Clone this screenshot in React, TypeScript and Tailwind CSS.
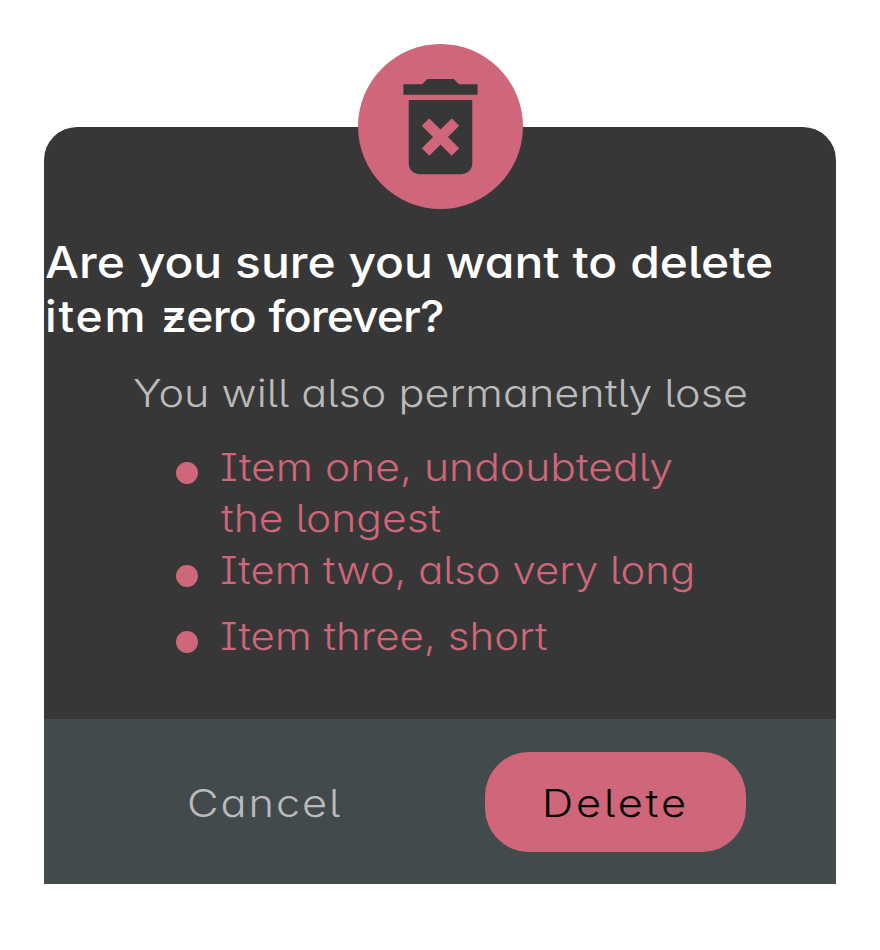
import { MdDeleteForever } from "react-icons/md";

const items = [
  {
    height: "h-[103px]",
    lines: [
      { text: "Item one, undoubtedly", style: "scale-x-[1.122]" },
      { text: "the longest", style: "scale-x-[1.12] ml-[1px]" },
    ],
  },
  {
    height: "h-[66px]",
    lines: [{ text: "Item two, also very long", style: "scale-x-[1.102]" }],
  },
  {
    height: "h-[66px]",
    lines: [{ text: "Item three, short", style: "scale-x-[1.107]" }],
  },
];

export default function App() {
  return (
    <div className="h-[950px] w-[880px] bg-white px-11 pt-11 font-['Inter',sans-serif] [font-feature-settings:'cv05','cv08','cv11']">
      <main className="mt-[83px] flex h-[757px] flex-col rounded-t-[33px] bg-[#373737]">
        <div className="-mt-[83px] ml-[314px] flex size-[165px] shrink-0 items-center justify-center rounded-full bg-[#cf6679] text-[#373737]">
          <MdDeleteForever size={127} />
        </div>
        <h1 className="mt-[26px] pl-px text-[44px] leading-[54px] font-medium whitespace-nowrap text-white">
          <span className="block w-fit origin-left scale-x-[1.091]">
            Are you sure you want to delete
          </span>
          <span className="block w-fit origin-left scale-x-105">
            <span className="tracking-[1.7px]">item </span>
            <span className="tracking-[-0.8px]">
              <span className="relative after:absolute after:top-[27px] after:left-[3px] after:h-[4px] after:w-[17px] after:bg-white after:content-['']">
                z
              </span>
              ero{" "}
            </span>
            <span className="ml-[1px] tracking-[-0.9px]">forever?</span>
          </span>
        </h1>
        <p className="mt-[25px] pl-[89px] text-[38px] leading-[51.5px] font-light whitespace-nowrap text-[#bbbbbb]">
          <span className="block w-fit origin-left scale-x-[1.135]">
            You will also permanently lose
          </span>
        </p>
        <ul className="mt-[22px] pl-[132px] text-[38px] leading-[51.5px] font-light text-[#cf6679]">
          {items.map((item) => (
            <li key={item.lines[0].text} className={`flex ${item.height}`}>
              <span className="mt-[20px] mr-[22px] size-[22px] rounded-full bg-[#cf6679]" />
              <span className="whitespace-nowrap">
                {item.lines.map((line) => (
                  <span key={line.text} className={`block w-fit origin-left ${line.style}`}>
                    {line.text}
                  </span>
                ))}
              </span>
            </li>
          ))}
        </ul>
        <footer className="mt-auto flex h-[165px] shrink-0 items-center bg-[#424a4c] text-[38px] font-light">
          <button className="ml-[143px] pt-1 text-[#bbbbbb]">
            <span className="block w-fit origin-left scale-x-[1.14] tracking-[1.7px]">Cancel</span>
          </button>
          <button className="mr-[90px] ml-auto h-[100px] w-[261px] rounded-[44px] bg-[#cf6679] pt-1 pl-[57px] text-black">
            <span className="block w-fit origin-left scale-x-[1.14] tracking-[2.5px]">Delete</span>
          </button>
        </footer>
      </main>
    </div>
  );
}
